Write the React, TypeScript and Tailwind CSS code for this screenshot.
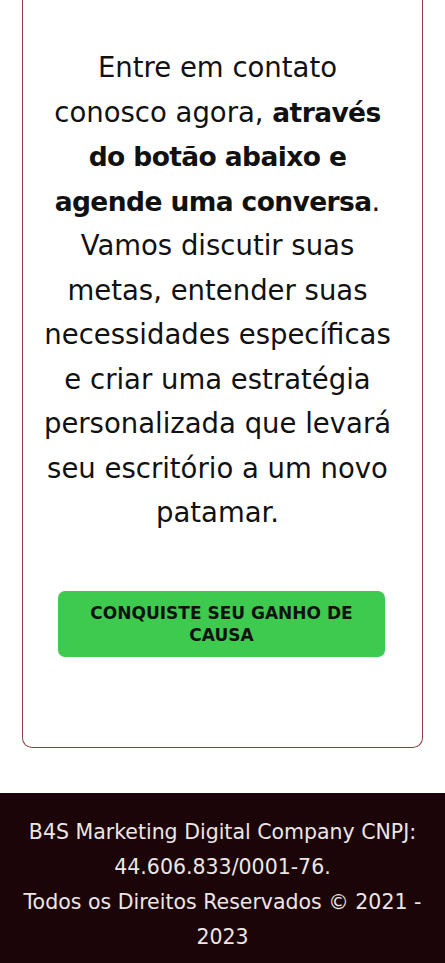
import React from "react";

export default function App() {
  const B = ({ children }: { children: React.ReactNode }) => (
    <b className="font-bold text-[26.5px] leading-none tracking-[-0.6px]">{children}</b>
  );
  return (
    <div className="min-h-[963px] bg-white" style={{ fontFamily: '"DejaVu Sans", sans-serif' }}>
      <div className="mx-[22px] border-x border-b border-[#8e3f3f] rounded-b-[10px] pt-[45px] pb-[90px]">
        <p className="pr-[10px] text-center text-[27.5px] leading-[44.5px] text-[#111111]">
          Entre em contato
          <br />
          conosco agora, <B>através</B>
          <br />
          <B>do botão abaixo e</B>
          <br />
          <B>agende uma conversa</B>.
          <br />
          Vamos discutir suas
          <br />
          metas, entender suas
          <br />
          necessidades específicas
          <br />
          e criar uma estratégia
          <br />
          personalizada que levará
          <br />
          seu escritório a um novo
          <br />
          patamar.
        </p>
        <div className="mt-[56px] ml-[35px] mr-[37px] h-[66px] rounded-[7px] bg-[#3ec94f] flex items-center justify-center text-center">
          <span className="text-[17px] leading-[22px] font-semibold text-[#111111] uppercase">
            CONQUISTE SEU GANHO DE
            <br />
            CAUSA
          </span>
        </div>
      </div>
      <footer className="mt-[45px] bg-[#1b0508] pt-[22px] pb-[10px] px-[4px] text-center text-[20.5px] leading-[35px] text-[#ece6e6]">
        B4S Marketing Digital Company CNPJ:
        <br />
        44.606.833/0001-76.
        <br />
        Todos os Direitos Reservados © 2021 -
        <br />
        2023
      </footer>
    </div>
  );
}
